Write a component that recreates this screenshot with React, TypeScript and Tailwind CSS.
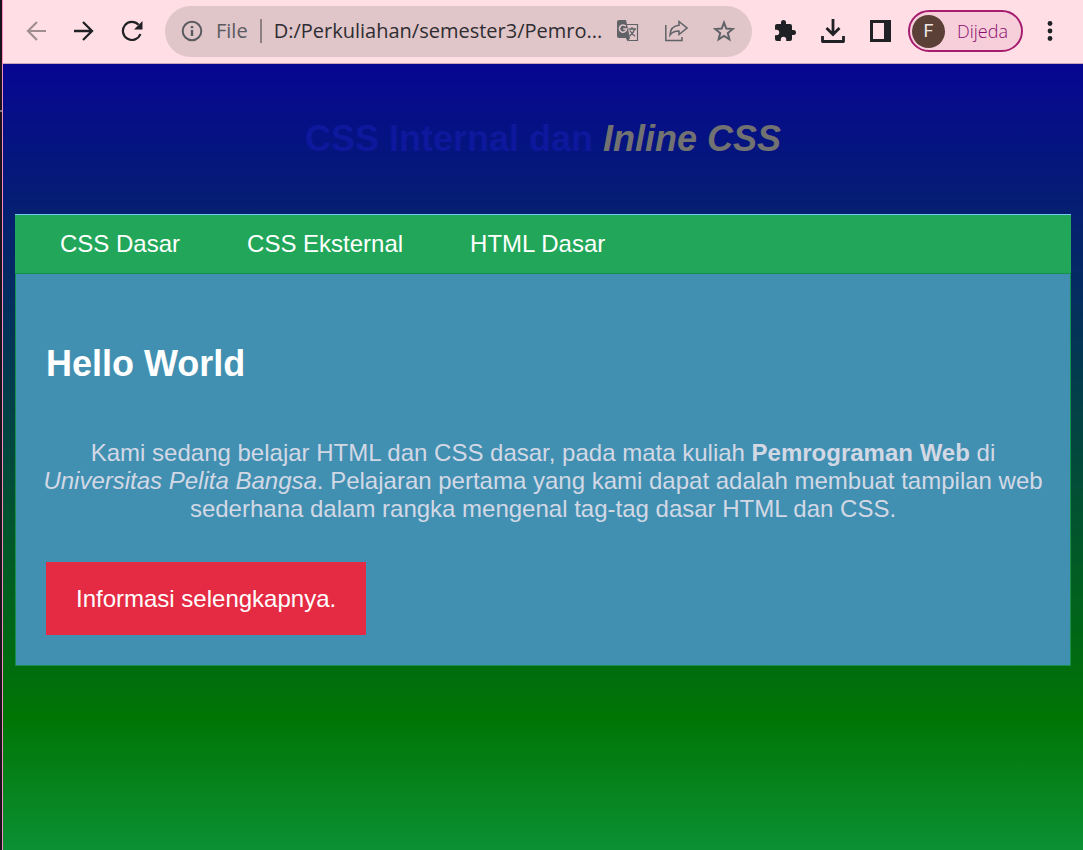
import type { ReactNode } from "react";

function IconButton({ label, className = "", children }: { label: string; className?: string; children: ReactNode }) {
  return (
    <button type="button" aria-label={label} className={`flex size-8 shrink-0 items-center justify-center ${className}`}>
      {children}
    </button>
  );
}

function Toolbar() {
  return (
    <header className="flex h-16 items-center border-b border-[#c9a6ba] bg-[#ffdfe5] px-[17px] pb-px font-['Open_Sans',sans-serif] text-[#202124]">
      <div className="flex shrink-0 gap-4">
        <IconButton label="Back" className="text-[#a08d92]">
          <svg width="22" height="22" viewBox="0 0 22 22" fill="none" stroke="currentColor" strokeWidth="2.2">
            <path d="M21 11H3M12 2 3 11l9 9" />
          </svg>
        </IconButton>
        <IconButton label="Forward">
          <svg width="22" height="22" viewBox="0 0 22 22" fill="none" stroke="currentColor" strokeWidth="2.3">
            <path d="M1 11h18M10 2l9 9-9 9" />
          </svg>
        </IconButton>
        <IconButton label="Reload">
          <svg width="22" height="22" viewBox="0 0 22 22" fill="none" stroke="currentColor" strokeWidth="2.2">
            <path d="M19.4 14A9 9 0 1 1 17.5 4.8" />
            <path d="M21.5 1v8.500H13z" fill="currentColor" stroke="none" />
          </svg>
        </IconButton>
      </div>

      <div className="ml-[17px] flex h-[51px] min-w-0 flex-1 items-center rounded-full bg-[#e0c5c9] pl-4 text-[#5a5b5f]">
        <svg className="shrink-0" width="22" height="22" viewBox="0 0 22 22" fill="none" stroke="currentColor" strokeWidth="2">
          <circle cx="11" cy="11" r="9.3" />
          <path d="M11 10v6M11 6v2.2" strokeWidth="2.4" />
        </svg>
        <span className="ml-[13px] shrink-0 text-xl">File</span>
        <span className="ml-3 h-6 w-0.5 shrink-0 bg-[#8d7f83]" />
        <span className="ml-3 min-w-0 flex-1 text-xl whitespace-nowrap text-[#2e2d31]">D:/Perkuliahan/semester3/Pemro...</span>
        <div className="mr-3 flex shrink-0 gap-4 text-[#5f6367]">
          <IconButton label="Translate">
            <svg width="22" height="22" viewBox="0 0 22 22">
              <path d="M10 4.5h10.500V20.500H12L9 17" fill="none" stroke="currentColor" strokeWidth="1.2" />
              <path d="M2 0h7l4 18H2a2 2 0 0 1-2-2V2a2 2 0 0 1 2-2z" fill="currentColor" />
              <path d="M9 18h4l-2.500 3.500z" fill="currentColor" />
              <path d="M8.800 6.300A3.600 3.600 0 1 0 9.600 9H6.200" fill="none" stroke="#e0c5c9" strokeWidth="1.6" />
              <path d="M11.500 9h7.500M15 7v2M17.700 9c-.8 3-2.500 5.200-5 7M13 10.500c1.200 2.500 2.800 4.300 5 5.800" fill="none" stroke="currentColor" strokeWidth="1.3" />
            </svg>
          </IconButton>
          <IconButton label="Share">
            <svg width="24" height="22" viewBox="0 0 24 22" fill="none" stroke="currentColor" strokeWidth="1.5">
              <path d="M1.800 5v15.500H18V17" />
              <path d="M15 1.500 23 8l-8 6.500V11c-4 0-7 1.200-9 4 .3-5.400 3.400-9.200 9-9.700z" />
            </svg>
          </IconButton>
          <IconButton label="Bookmark">
            <svg width="22" height="22" viewBox="0 0 22 22" fill="none" stroke="currentColor" strokeWidth="2">
              <path d="m11 2.600 2.300 5.900 6.500.5-5 4.100 1.600 6.200L11 16l-5.400 3.300 1.600-6.200-5-4.100 6.500-.5z" />
            </svg>
          </IconButton>
        </div>
      </div>

      <div className="ml-[17px] flex shrink-0 items-center gap-4">
        <IconButton label="Extensions">
          <svg width="22" height="22" viewBox="1 1 22 22" fill="currentColor">
            <path d="M20.500 11H19V7a2 2 0 0 0-2-2h-4V3.500a2.500 2.500 0 0 0-5 0V5H4c-1.100 0-1.990.9-1.990 2v3.800H3.500a2.700 2.700 0 0 1 0 5.400H2V20a2 2 0 0 0 2 2h3.800v-1.500a2.700 2.700 0 0 1 5.400 0V22H17a2 2 0 0 0 2-2v-4h1.500a2.500 2.500 0 0 0 0-5z" />
          </svg>
        </IconButton>
        <IconButton label="Downloads">
          <svg width="24" height="24" viewBox="0 0 24 24" fill="none" stroke="currentColor" strokeWidth="2.8">
            <path d="M12 0v15M5.500 9l6.500 6.500L18.500 9" />
            <path d="M1.500 17v5.500h21V17" strokeLinejoin="round" />
          </svg>
        </IconButton>
        <IconButton label="Side panel">
          <svg width="22" height="22" viewBox="0 0 22 22" fill="currentColor">
            <path fillRule="evenodd" d="M0 0h21v22H0zM3 3v16h11V3z" />
          </svg>
        </IconButton>
      </div>

      <button type="button" className="ml-[11px] flex h-[42px] shrink-0 items-center rounded-full border-2 border-[#a61d70] bg-[#f7cfda] pr-[13px] pl-0.5 text-lg font-light text-[#8c0c6e]">
        <span className="mr-3 flex size-[33px] items-center justify-center rounded-full bg-[#5b4037] font-['Roboto',sans-serif] text-lg font-normal text-[#f0e8e6]">F</span>
        Dijeda
      </button>
      <IconButton label="Menu" className="ml-[11px]">
        <svg width="6" height="22" viewBox="0 0 6 22" fill="currentColor">
          <circle cx="3" cy="3.500" r="2.400" />
          <circle cx="3" cy="11" r="2.400" />
          <circle cx="3" cy="18.500" r="2.400" />
        </svg>
      </IconButton>
    </header>
  );
}

export default function App() {
  return (
    <div className="flex min-h-screen">
      <div className="w-0.5 shrink-0 bg-[#18121a] pt-[110px]">
        <div className="h-0.5 bg-[#77757a]" />
      </div>
      <div className="flex min-w-0 flex-1 flex-col border-l border-[#f48cc0]">
        <Toolbar />
        <main className="flex-1 bg-[linear-gradient(to_bottom,#060692_0%,#007504_83%,#0b9033_100%)] px-3 pb-12 font-['Liberation_Sans',sans-serif] text-2xl leading-7 text-white">
          <h1 className="py-12 text-center text-4xl leading-[54px] font-bold text-[#0e189c]">
            CSS Internal dan <i className="text-[#727272]">Inline CSS</i>
          </h1>
          <nav className="flex h-[59px] items-center gap-px border-t border-[#72c7f0] bg-[#22a75a] pl-3">
            <a href="#dasar" className="px-[33px]">CSS Dasar</a>
            <a href="#eksternal" className="px-[33px]">CSS Eksternal</a>
            <a href="#html" className="px-[33px]">HTML Dasar</a>
          </nav>
          <section className="border border-[#148f4c] bg-[#4190b2] px-[30px] pb-[30px]">
            <h2 className="pt-[69px] text-4xl leading-[42px] font-bold">Hello World</h2>
            <p className="-mx-1 pt-[54px] text-center text-[#d3d8e5]">
              Kami sedang belajar HTML dan CSS dasar, pada mata kuliah <b>Pemrograman Web</b> di{" "}
              <i>Universitas Pelita Bangsa</i>. Pelajaran pertama yang kami dapat adalah membuat tampilan web sederhana
              dalam rangka mengenal tag-tag dasar HTML dan CSS.
            </p>
            <a href="#info" className="mt-[39px] inline-flex h-[73px] items-center bg-[#e52b43] px-[30px]">
              Informasi selengkapnya.
            </a>
          </section>
        </main>
      </div>
    </div>
  );
}
